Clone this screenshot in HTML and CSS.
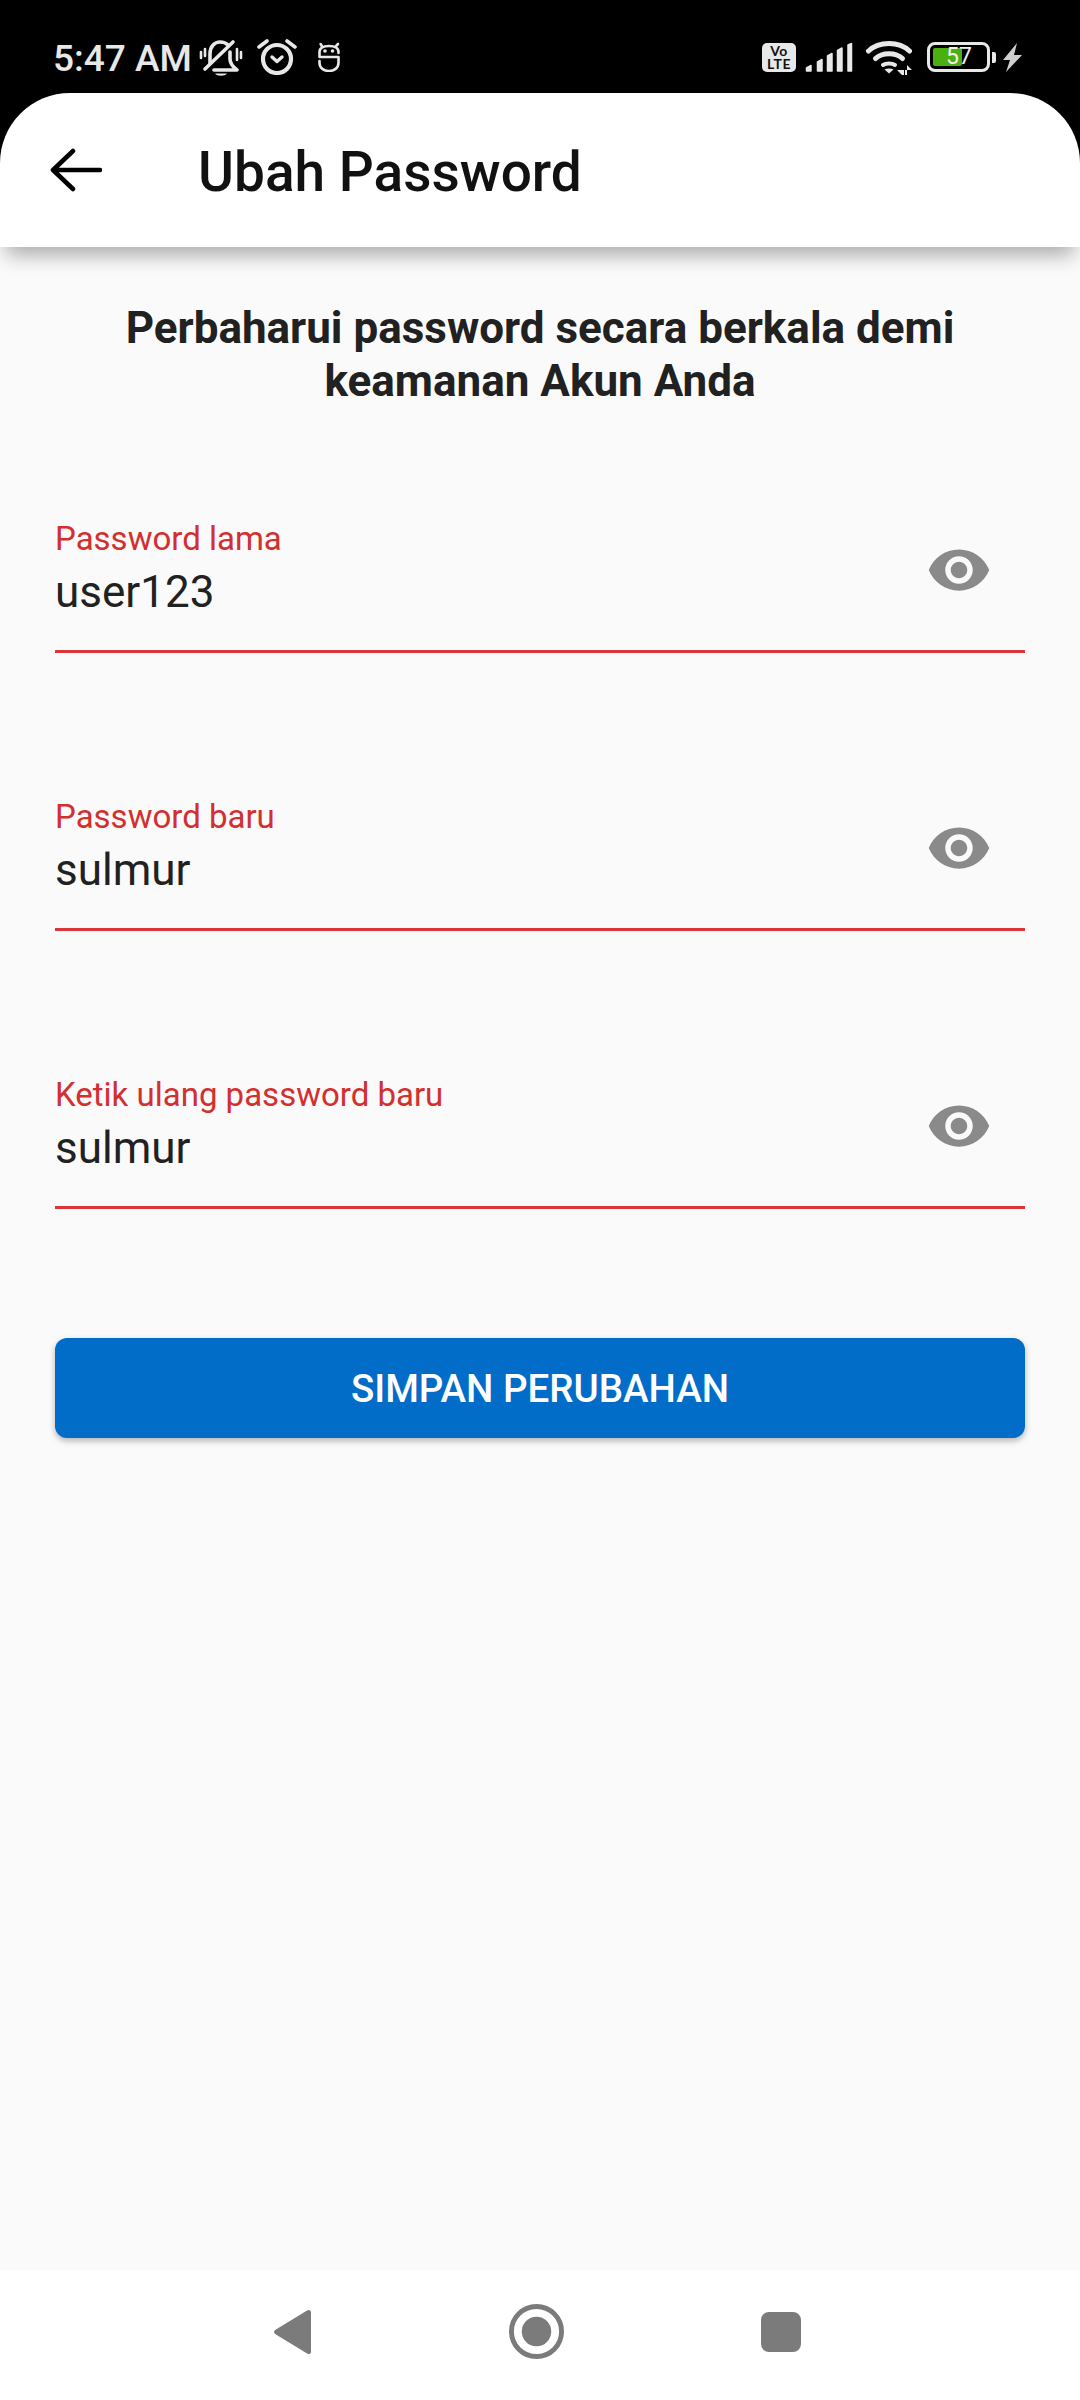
FILE: index.html
```html
<!DOCTYPE html>
<html lang="id">
<head>
    <meta charset="UTF-8">
    <meta name="viewport" content="width=device-width, initial-scale=1.0">
    <title>Ubah Password</title>
    <link rel="stylesheet" href="styles.css">
</head>
<body>
    <div class="top">
        <div class="status">
            <div class="status-left">
                <span class="time">5:47 AM</span>
                <svg class="ic-bell" viewBox="0 0 44 38" fill="none" stroke="#e8e8e8" stroke-linecap="round" stroke-linejoin="round">
                    <path d="M11 24 V15 C11 7 16 3 21 3 C24 3 27 4 29 6" stroke-width="3.600"/>
                    <path d="M31 13 V20 C31 25 34 28 38 31 H15" stroke-width="3.600"/>
                    <path d="M16 34.500 H28 C26 37.500 18 37.500 16 34.500 Z" fill="#e8e8e8" stroke="none"/>
                    <path d="M6 30 L34 3" stroke-width="3.600"/>
                    <path d="M2 13 V19 M6 10 V17 M38 10 V21 M42 13 V19" stroke-width="2.600"/>
                </svg>
                <svg class="ic-alarm" viewBox="0 0 40 37" fill="none" stroke="#e8e8e8" stroke-linecap="round" stroke-linejoin="round">
                    <circle cx="20" cy="21" r="14" stroke-width="4.200"/>
                    <path d="M15 19 L20 23.500 L25 19" stroke-width="3.400"/>
                    <path d="M2 9 L10 3 M38 9 L30 3" stroke-width="3.600"/>
                </svg>
                <svg class="ic-robot" viewBox="0 0 22 30" fill="none" stroke="#e8e8e8" stroke-linecap="round" stroke-linejoin="round">
                    <path d="M20.500 11 V10 C20.500 6 17 4 11 4 C5 4 1.500 6 1.500 10 V15 H20.500 V21 C20.500 26 16 29 11 29 C6 29 1.500 26 1.500 21 V19" stroke-width="2.600"/>
                    <path d="M2.600 2 L4.300 4.700 M20 2 L17.500 4.700" stroke-width="2.600"/>
                    <circle cx="7" cy="9" r="1.800" fill="#e8e8e8" stroke="none"/>
                    <circle cx="14.500" cy="9" r="1.800" fill="#e8e8e8" stroke="none"/>
                </svg>
            </div>
            <div class="status-right">
                <div class="volte">
                    <span class="volte-line">Vo</span>
                    <span class="volte-line">LTE</span>
                </div>
                <svg class="ic-signal" viewBox="0 0 48 29" fill="#e8e8e8" stroke="#e8e8e8" stroke-width="1.500" stroke-linejoin="round">
                    <path d="M1.500 28 V25 L6 22.500 V28 Z"/>
                    <path d="M12.500 28 V19 L17 16.500 V28 Z"/>
                    <path d="M22.500 28 V13 L27 10.500 V28 Z"/>
                    <path d="M32.500 28 V7.500 L37 5 V28 Z"/>
                    <path d="M43 28 V2 L46.500 0.500 V28 Z"/>
                </svg>
                <svg class="ic-wifi" viewBox="0 0 46 35" fill="none" stroke="#e8e8e8" stroke-width="5" stroke-linecap="round">
                    <path d="M2.500 11 C13 1 33 1 43.500 11"/>
                    <path d="M9.500 18.500 C16 12 30 12 36.500 18.500"/>
                    <path d="M17 25 C20 23 26 23 29 25" stroke-width="4"/>
                    <path d="M18.500 29.500 L23 33.500 L27.500 29.500 C25 28 21 28 18.500 29.500 Z" fill="#e8e8e8" stroke="none"/>
                    <path d="M31 30 H38 V27 V35 H36 Z M39 30 H46 L41 25 V35 H39 Z" fill="#e8e8e8" stroke="none"/>
                </svg>
                <div class="battery">
                    <div class="battery-body">
                        <div class="battery-fill"></div>
                        <span class="battery-num">57</span>
                    </div>
                    <div class="battery-cap"></div>
                </div>
                <svg class="ic-bolt" viewBox="0 0 19 29" fill="#cfcfcf"><path d="M14 0 L0 17 H7 L3 29 L19 12 H11 Z"/></svg>
            </div>
        </div>
        <header class="appbar">
            <svg class="ic-back" viewBox="0 0 52 44" fill="none" stroke="#000" stroke-width="4.500" stroke-linecap="round" stroke-linejoin="round">
                <path d="M50 22 H3 M23 3 L3 22 L23 41"/>
            </svg>
            <h1 class="appbar-title">Ubah Password</h1>
        </header>
    </div>

    <main class="content">
        <h2 class="intro">Perbaharui password secara berkala demi<br>keamanan Akun Anda</h2>

        <div class="field">
            <div class="field-text">
                <div class="field-label">Password lama</div>
                <div class="field-value">user123</div>
            </div>
            <svg class="ic-eye" viewBox="0 0 24 24" fill="#8a8a8a"><path d="M12 4.500C7 4.500 2.730 7.610 1 12c1.730 4.390 6 7.500 11 7.500s9.270-3.110 11-7.500c-1.730-4.390-6-7.500-11-7.500zM12 17c-2.760 0-5-2.240-5-5s2.240-5 5-5 5 2.240 5 5-2.240 5-5 5zm0-8c-1.660 0-3 1.340-3 3s1.340 3 3 3 3-1.340 3-3-1.340-3-3-3z"/></svg>
        </div>

        <div class="field">
            <div class="field-text">
                <div class="field-label">Password baru</div>
                <div class="field-value">sulmur</div>
            </div>
            <svg class="ic-eye" viewBox="0 0 24 24" fill="#8a8a8a"><path d="M12 4.500C7 4.500 2.730 7.610 1 12c1.730 4.390 6 7.500 11 7.500s9.270-3.110 11-7.500c-1.730-4.390-6-7.500-11-7.500zM12 17c-2.760 0-5-2.240-5-5s2.240-5 5-5 5 2.240 5 5-2.240 5-5 5zm0-8c-1.660 0-3 1.340-3 3s1.340 3 3 3 3-1.340 3-3-1.340-3-3-3z"/></svg>
        </div>

        <div class="field">
            <div class="field-text">
                <div class="field-label">Ketik ulang password baru</div>
                <div class="field-value">sulmur</div>
            </div>
            <svg class="ic-eye" viewBox="0 0 24 24" fill="#8a8a8a"><path d="M12 4.500C7 4.500 2.730 7.610 1 12c1.730 4.390 6 7.500 11 7.500s9.270-3.110 11-7.500c-1.730-4.390-6-7.500-11-7.500zM12 17c-2.760 0-5-2.240-5-5s2.240-5 5-5 5 2.240 5 5-2.240 5-5 5zm0-8c-1.660 0-3 1.340-3 3s1.340 3 3 3 3-1.340 3-3-1.340-3-3-3z"/></svg>
        </div>

        <button class="btn" type="button">SIMPAN PERUBAHAN</button>
    </main>

    <nav class="navbar">
        <svg class="nav-back" viewBox="0 0 38 46" fill="#7b7b7b"><path d="M34 1 C36 -0.500 38 0.500 38 3 V43 C38 45.500 36 46.500 34 45 L2 25.500 C-0.500 24 -0.500 22 2 20.500 Z"/></svg>
        <svg class="nav-home" viewBox="0 0 56 56"><circle cx="28" cy="28" r="25.500" fill="none" stroke="#7b7b7b" stroke-width="5"/><circle cx="28" cy="28" r="15" fill="#7b7b7b"/></svg>
        <div class="nav-recent"></div>
    </nav>
</body>
</html>
```

FILE: styles.css
```css
* {
    box-sizing: border-box;
}
body {
    font-family: Roboto, "Noto Sans", sans-serif;
    margin: 0;
    width: 1080px;
    height: 2400px;
    display: flex;
    flex-direction: column;
    background-color: #fafafa;
    overflow: hidden;
}
.top {
    background-color: #000;
    position: relative;
    z-index: 1;
}
.status {
    height: 93px;
    display: flex;
    justify-content: space-between;
    align-items: flex-start;
    padding: 0 58px 0 53px;
    color: #e8e8e8;
}
.status-left {
    display: flex;
    align-items: flex-start;
    padding-top: 38px;
}
.status-right {
    display: flex;
    align-items: flex-start;
    padding-top: 40px;
}
.time {
    font-size: 37px;
    font-weight: 500;
    line-height: 38px;
    width: 146px;
    margin-top: 2px;
}
.ic-bell {
    width: 44px;
    height: 38px;
    margin-top: 1px;
}
.ic-alarm {
    width: 40px;
    height: 37px;
    margin-left: 14px;
}
.ic-robot {
    width: 22px;
    height: 30px;
    margin: 4px 0 0 21px;
}
.volte {
    width: 34px;
    height: 29px;
    margin-top: 3px;
    background-color: #e8e8e8;
    border-radius: 5px;
    color: #111;
    font-family: Lato, sans-serif;
    font-size: 14px;
    font-weight: 700;
    text-align: center;
    padding-top: 1px;
}
.volte-line {
    display: block;
    height: 13px;
    line-height: 13px;
    letter-spacing: 0.500px;
}
.ic-signal {
    width: 48px;
    height: 29px;
    margin: 3px 0 0 9px;
}
.ic-wifi {
    width: 46px;
    height: 35px;
    margin-left: 13px;
}
.battery {
    display: flex;
    align-items: center;
    margin: 2px 0 0 15px;
}
.battery-body {
    width: 63px;
    height: 30px;
    border: 3px solid #e8e8e8;
    border-radius: 8px;
    padding: 3px;
    position: relative;
}
.battery-fill {
    width: 29px;
    height: 18px;
    background-color: #4caf10;
    border-radius: 2px;
}
.battery-num {
    position: absolute;
    left: 16px;
    top: -3px;
    font-size: 23px;
    line-height: 30px;
    color: #f0f0f0;
}
.battery-cap {
    width: 4px;
    height: 11px;
    margin-left: 2px;
    background-color: #e8e8e8;
    border-radius: 0 2px 2px 0;
}
.ic-bolt {
    width: 19px;
    height: 29px;
    margin: 3px 0 0 7px;
}
.appbar {
    height: 154px;
    background-color: #fff;
    border-radius: 70px 70px 0 0;
    display: flex;
    align-items: center;
    box-shadow: 0 14px 20px -6px rgba(0, 0, 0, 0.32);
    padding-left: 50px;
}
.ic-back {
    width: 52px;
    height: 44px;
    margin-top: -1px;
}
.appbar-title {
    margin: 4px 0 0 96px;
    font-size: 55px;
    font-weight: 500;
    color: #111;
}
.content {
    flex: 1;
    padding: 55px 55px 0;
}
.intro {
    margin: 0 0 109px;
    font-size: 44px;
    font-weight: 700;
    line-height: 53px;
    text-align: center;
    color: #212121;
}
.field {
    display: flex;
    align-items: center;
    height: 136px;
    border-bottom: 3px solid #d9363a;
    padding-bottom: 31px;
    margin-bottom: 142px;
}
.field-text {
    flex: 1;
}
.field-label {
    font-size: 33px;
    line-height: 40px;
    color: #d32f2f;
}
.field-value {
    font-size: 44px;
    line-height: 52px;
    margin-top: 7px;
    color: #212121;
}
.ic-eye {
    width: 66px;
    height: 66px;
    margin: 3px 33px 0 0;
}
.btn {
    display: block;
    width: 100%;
    height: 100px;
    margin-top: -13px;
    background-color: #016dc8;
    color: #fff;
    border: none;
    border-radius: 12px;
    font-family: Roboto, sans-serif;
    font-size: 38.500px;
    font-weight: 500;
    box-shadow: 0 3px 6px rgba(0, 0, 0, 0.28);
}
.navbar {
    height: 130px;
    background-color: #fff;
    position: relative;
}
.nav-back {
    position: absolute;
    left: 274px;
    top: 39px;
    width: 37px;
    height: 46px;
}
.nav-home {
    position: absolute;
    left: 509px;
    top: 34px;
    width: 55px;
    height: 55px;
}
.nav-recent {
    position: absolute;
    left: 761px;
    top: 42px;
    width: 40px;
    height: 40px;
    background-color: #7b7b7b;
    border-radius: 8px;
}
```
